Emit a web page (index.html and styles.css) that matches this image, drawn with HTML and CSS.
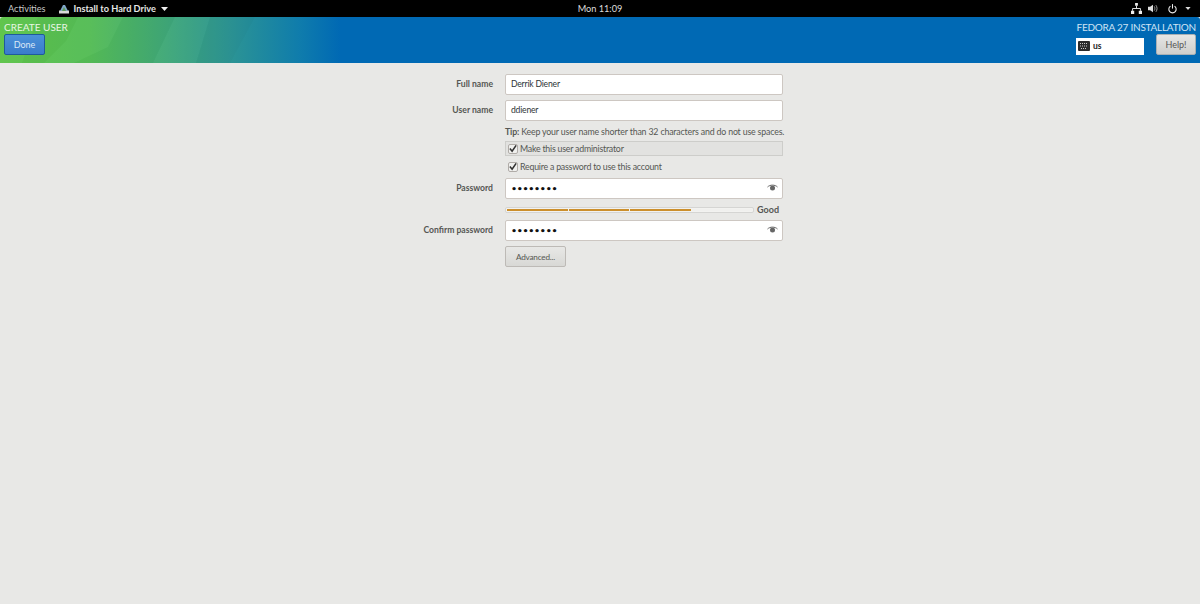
FILE: index.html
```html
<!DOCTYPE html>
<html lang="en">
<head>
<meta charset="utf-8">
<title>Create User</title>
<link rel="stylesheet" href="styles.css">
</head>
<body>
<div class="topbar">
  <div class="top-left">
    <span class="activities">Activities</span>
    <span class="app">
      <svg class="app-icon" width="10" height="10" viewBox="0 0 10 10"><rect x="0" y="6.500" width="10" height="3" fill="#d8d8d8"/><path d="M1 7 4 1h2l3 6z" fill="#7fa6c9"/><path d="M3 7 5 3l2 4z" fill="#5f9a55"/></svg>
      Install to Hard Drive
      <svg class="caret" width="7" height="4" viewBox="0 0 7 4"><path d="M0 0h7L3.500 4z" fill="#f0f0f0"/></svg>
    </span>
  </div>
  <div class="clock">Mon 11:09</div>
  <div class="top-right">
    <svg width="11" height="11" viewBox="0 0 12 12"><path d="M4.500 0h3v3h-3zM0 8.500h3.500V12H0zM8.500 8.500H12V12H8.500z" fill="#eee"/><path d="M6 3v3M1.700 8.500V6h8.600v2.500" fill="none" stroke="#eee"/></svg>
    <svg width="10" height="9" viewBox="0 0 12 10"><path d="M0 3h2.500L6 .5v9L2.500 7H0z" fill="#ddd"/><path d="M7.500 2.500c1 1.500 1 3.500 0 5M9.500 1c1.800 2.500 1.800 5.500 0 8" fill="none" stroke="#999" stroke-width="1.200"/></svg>
    <svg class="power" width="9" height="10" viewBox="0 0 11 12"><path d="M3 2.500a4.500 4.500 0 1 0 5 0" fill="none" stroke="#eee" stroke-width="1.300"/><path d="M5.500 0v5.500" stroke="#eee" stroke-width="1.300"/></svg>
    <svg class="caret" width="6" height="3" viewBox="0 0 7 4"><path d="M0 0h7L3.500 4z" fill="#ddd"/></svg>
  </div>
</div>
<header class="header">
  <svg class="facets" width="340" height="46" viewBox="0 0 340 46" aria-hidden="true">
    <path d="M0 0h38L22 46H0z" fill="#fff" opacity=".02"/>
    <path d="M38 0h40L66 24 44 46H22z" fill="#000" opacity=".02"/>
    <path d="M78 0h45L108 30 74 46H44L66 24z" fill="#fff" opacity=".025"/>
    <path d="M123 0h52l-22 46H74l34-16z" fill="#000" opacity=".02"/>
    <path d="M175 0h35l-14 46h-43z" fill="#fff" opacity=".025"/>
    <path d="M210 0h45l-25 46h-34z" fill="#000" opacity=".02"/>
  </svg>
  <div class="header-left">
    <h1 class="title">CREATE USER</h1>
    <button class="btn btn-done" type="button">Done</button>
  </div>
  <div class="header-right">
    <div class="product">FEDORA 27 INSTALLATION</div>
    <div class="header-controls">
      <div class="layout">
        <svg width="12" height="10" viewBox="0 0 12 10"><rect width="12" height="10" rx="1" fill="#2b2b2b"/><path d="M2 2.500h8M2 5h8M3 7.500h6" stroke="#ccc" stroke-width="1" stroke-dasharray="1 1"/></svg>
        <span>us</span>
      </div>
      <button class="btn btn-help" type="button">Help!</button>
    </div>
  </div>
</header>
<main class="form">
  <label class="label">Full name</label>
  <div class="input"><span>Derrik Diener</span></div>
  <label class="label">User name</label>
  <div class="input"><span>ddiener</span></div>
  <div class="tip field"><b>Tip:</b> Keep your user name shorter than 32 characters and do not use spaces.</div>
  <div class="check check-admin field"><span class="box"><svg width="9" height="9" viewBox="0 0 9 9"><path d="M1 4.500 3.500 7.500 8 1" fill="none" stroke="#333" stroke-width="1.800"/></svg></span>Make this user administrator</div>
  <div class="check check-pass field"><span class="box"><svg width="9" height="9" viewBox="0 0 9 9"><path d="M1 4.500 3.500 7.500 8 1" fill="none" stroke="#333" stroke-width="1.800"/></svg></span>Require a password to use this account</div>
  <label class="label">Password</label>
  <div class="input input-pass"><span class="dots">••••••••</span>
    <svg class="eye" width="11" height="8" viewBox="0 0 11 8"><path d="M.5 3C3 .5 8 .5 10.500 3" fill="none" stroke="#666"/><circle cx="5.500" cy="4" r="2.500" fill="#666"/></svg>
  </div>
  <div class="strength field">
    <div class="meter"><i></i><i></i><i></i><i class="off"></i></div>
    <b>Good</b>
  </div>
  <label class="label">Confirm password</label>
  <div class="input input-pass"><span class="dots">••••••••</span>
    <svg class="eye" width="11" height="8" viewBox="0 0 11 8"><path d="M.5 3C3 .5 8 .5 10.500 3" fill="none" stroke="#666"/><circle cx="5.500" cy="4" r="2.500" fill="#666"/></svg>
  </div>
  <div class="field"><button class="btn btn-adv" type="button">Advanced...</button></div>
</main>
</body>
</html>
```
FILE: styles.css
```css
* { box-sizing: border-box; }
html, body { margin: 0; height: 100%; }
body {
  background: #e8e8e6;
  font-family: Lato, "Open Sans", sans-serif;
  font-size: 9px;
  color: #2e3436;
  overflow: hidden;
}
.topbar {
  height: 17px;
  background: #000;
  color: #e6e6e6;
  display: grid;
  grid-template-columns: 1fr auto 1fr;
  align-items: center;
  font-size: 9.200px;
}
.top-left { display: flex; align-items: center; padding-left: 8px; }
.activities { color: #c8c8c8; }
.app { display: flex; align-items: center; margin-left: 13px; font-weight: 700; gap: 3px; }
.app-icon { margin-right: 2px; }
.caret { margin-left: 2px; }
.clock { color: #ddd; }
.top-right { display: flex; justify-content: flex-end; align-items: center; gap: 6px; padding-right: 9px; }
.top-right .power { margin-left: 4px; }
.header {
  height: 46px;
  position: relative;
  display: flex;
  justify-content: space-between;
  background: linear-gradient(90deg, #5ec44a 0, #55bd57 90px, #3fa77a 170px, #2c9494 230px, #0f7cac 300px, #0069b4 340px);
  border-radius: 3px 3px 0 0;
  padding: 3px 4px 0 4px;
}
.facets { position: absolute; left: 0; top: 0; }
.header-left, .header-right { position: relative; }
.title { margin: 0; font-size: 10px; line-height: 14px; font-weight: 400; color: #e8f6e4; }
.btn {
  font: inherit;
  border-radius: 2px;
  display: block;
  padding: 0;
}
.btn-done {
  width: 41px;
  height: 21px;
  background: linear-gradient(#4a90d9, #3a7ccb);
  border: 1px solid #1f5a9c;
  color: #dbe8f6;
}
.header-right { display: flex; flex-direction: column; align-items: flex-end; }
.product { font-size: 10px; letter-spacing: -0.250px; line-height: 14px; color: #cfe4f4; }
.header-controls { display: flex; align-items: center; gap: 12px; }
.layout {
  width: 68px;
  height: 17px;
  margin-top: 3px;
  background: #fff;
  display: flex;
  align-items: center;
  gap: 3px;
  padding-left: 2px;
  font-size: 8.500px;
  font-weight: 700;
  color: #222;
}
.btn-help {
  width: 40px;
  height: 21px;
  background: linear-gradient(#e6e6e4, #cfcfcc);
  border: 1px solid #a8b0b4;
  color: #555;
}
.form {
  display: grid;
  grid-template-columns: 88px 278px;
  column-gap: 12px;
  padding: 11px 0 0 405px;
}
.label { text-align: right; font-weight: 700; color: #555753; line-height: 20px; font-size: 8.600px; }
.field { grid-column: 2; }
.input {
  grid-column: 2;
  height: 21px;
  background: #fff;
  border: 1px solid #cdc7c2;
  border-radius: 2px;
  display: flex;
  align-items: center;
  justify-content: space-between;
  padding: 0 4px 1px 5px;
  margin-bottom: 5px;
  color: #2e3436;
  font-size: 8.600px;
  letter-spacing: -0.200px;
}
.dots { font-size: 9.500px; letter-spacing: -0.300px; color: #111; font-family: "DejaVu Sans", sans-serif; font-weight: 700; }
.eye { display: block; }
.tip { height: 15px; line-height: 11px; color: #555753; white-space: nowrap; font-size: 8.800px; letter-spacing: -0.170px; }
.tip b { font-weight: 700; }
.check { display: flex; align-items: center; color: #555753; font-size: 8.800px; letter-spacing: -0.220px; }
.check-admin {
  height: 15px;
  background: #e2e2e0;
  border: 1px solid #cdcdca;
  padding-left: 2px;
}
.check-pass { height: 15px; padding-left: 3px; margin: 3px 0 4px; }
.box {
  width: 10px;
  height: 10px;
  margin-right: 2px;
  border: 1px solid #b0aca8;
  border-radius: 2px;
  background: #f0f0ee;
  display: flex;
  align-items: center;
  justify-content: center;
}
.strength { display: flex; align-items: center; justify-content: space-between; height: 15px; margin-top: -2px; margin-bottom: 3px; padding-right: 4px; color: #555753; }
.strength b { font-weight: 700; }
.meter {
  width: 249px;
  height: 6px;
  display: grid;
  grid-template-columns: repeat(4, 1fr);
  gap: 1px;
  padding: 1px;
  border: 1px solid #d5d5d3;
  border-radius: 2px;
  background: #f2f2f0;
}
.meter i { background: #cc8f2c; }
.meter i.off { background: #f0f0ee; }
.btn-adv {
  width: 61px;
  height: 21px;
  background: linear-gradient(#e8e8e6, #d8d8d5);
  border: 1px solid #bdbab6;
  color: #555753;
  font-size: 8.200px;
  letter-spacing: -0.200px;
}
```
